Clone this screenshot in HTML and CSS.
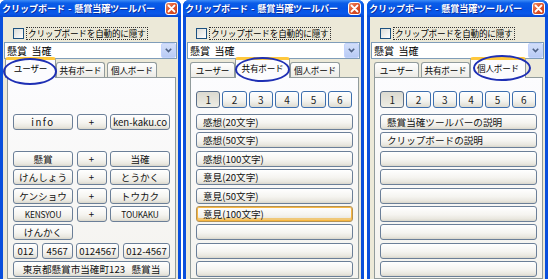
FILE: index.html
```html
<!DOCTYPE html>
<html lang="ja">
<head>
<meta charset="utf-8">
<title>クリップボード</title>
<link rel="stylesheet" href="styles.css">
</head>
<body>
<div class="desk">

  <div class="win w1">
    <div class="titlebar">
      <span class="title">クリップボード - 懸賞当確ツールバー</span>
      <span class="close"><svg width="9" height="9" viewBox="0 0 9 9"><path d="M1.5 1.5L7.5 7.5M7.5 1.5L1.5 7.5" stroke="#fff" stroke-width="1.8" stroke-linecap="round"/></svg></span>
    </div>
    <div class="body">
      <div class="chkrow"><span class="box"></span><span class="lbl">クリップボードを自動的に隠す</span></div>
      <div class="combo"><span class="ctext">懸賞&nbsp;&nbsp;当確</span><span class="drop"><svg width="7" height="5" viewBox="0 0 7 5"><path d="M0.8 0.8L3.5 3.6L6.2 0.8" fill="none" stroke="#4d6185" stroke-width="1.6"/></svg></span></div>
      <div class="tabs">
        <span class="tab t1 sel">ユーザー</span>
        <span class="tab t2">共有ボード</span>
        <span class="tab t3">個人ボード</span>
      </div>
      <div class="panel">
        <div class="numspacer"></div>
        <div class="list">
          <div class="row3"><span class="btn c wide spaced">info</span><span class="btn c">+</span><span class="btn c wide">ken-kaku.co</span></div>
          <div class="row3 empty"></div>
          <div class="row3"><span class="btn c wide">懸賞</span><span class="btn c">+</span><span class="btn c wide">当確</span></div>
          <div class="row3"><span class="btn c wide">けんしょう</span><span class="btn c">+</span><span class="btn c wide">とうかく</span></div>
          <div class="row3"><span class="btn c wide">ケンショウ</span><span class="btn c">+</span><span class="btn c wide">トウカク</span></div>
          <div class="row3"><span class="btn c wide caps">KENSYOU</span><span class="btn c">+</span><span class="btn c wide caps">TOUKAKU</span></div>
          <div class="row3"><span class="btn c wide">けんかく</span></div>
          <div class="row4"><span class="btn c">012</span><span class="btn c">4567</span><span class="btn c">0124567</span><span class="btn c">012-4567</span></div>
          <div class="row1"><span class="btn c">東京都懸賞市当確町123&nbsp;&nbsp;&nbsp;懸賞当</span></div>
        </div>
      </div>
    </div>
    <span class="mark m1"></span>
  </div>

  <div class="win w2">
    <div class="titlebar">
      <span class="title">クリップボード - 懸賞当確ツールバー</span>
      <span class="close"><svg width="9" height="9" viewBox="0 0 9 9"><path d="M1.5 1.5L7.5 7.5M7.5 1.5L1.5 7.5" stroke="#fff" stroke-width="1.8" stroke-linecap="round"/></svg></span>
    </div>
    <div class="body">
      <div class="chkrow"><span class="box"></span><span class="lbl">クリップボードを自動的に隠す</span></div>
      <div class="combo"><span class="ctext">懸賞&nbsp;&nbsp;当確</span><span class="drop"><svg width="7" height="5" viewBox="0 0 7 5"><path d="M0.8 0.8L3.5 3.6L6.2 0.8" fill="none" stroke="#4d6185" stroke-width="1.6"/></svg></span></div>
      <div class="tabs">
        <span class="tab t1">ユーザー</span>
        <span class="tab t2 sel">共有ボード</span>
        <span class="tab t3">個人ボード</span>
      </div>
      <div class="panel">
        <div class="nums"><span class="nb pressed">1</span><span class="nb">2</span><span class="nb">3</span><span class="nb">4</span><span class="nb">5</span><span class="nb">6</span></div>
        <div class="list">
          <div class="btn l">感想(20文字)</div>
          <div class="btn l">感想(50文字)</div>
          <div class="btn l">感想(100文字)</div>
          <div class="btn l">意見(20文字)</div>
          <div class="btn l">意見(50文字)</div>
          <div class="btn l hot">意見(100文字)</div>
          <div class="btn l"></div>
          <div class="btn l"></div>
          <div class="btn l"></div>
        </div>
      </div>
    </div>
    <span class="mark m2"></span>
  </div>

  <div class="win w3">
    <div class="titlebar">
      <span class="title">クリップボード - 懸賞当確ツールバー</span>
      <span class="close"><svg width="9" height="9" viewBox="0 0 9 9"><path d="M1.5 1.5L7.5 7.5M7.5 1.5L1.5 7.5" stroke="#fff" stroke-width="1.8" stroke-linecap="round"/></svg></span>
    </div>
    <div class="body">
      <div class="chkrow"><span class="box"></span><span class="lbl">クリップボードを自動的に隠す</span></div>
      <div class="combo"><span class="ctext">懸賞&nbsp;&nbsp;当確</span><span class="drop"><svg width="7" height="5" viewBox="0 0 7 5"><path d="M0.8 0.8L3.5 3.6L6.2 0.8" fill="none" stroke="#4d6185" stroke-width="1.6"/></svg></span></div>
      <div class="tabs">
        <span class="tab t1">ユーザー</span>
        <span class="tab t2">共有ボード</span>
        <span class="tab t3 sel">個人ボード</span>
      </div>
      <div class="panel">
        <div class="nums"><span class="nb pressed">1</span><span class="nb">2</span><span class="nb">3</span><span class="nb">4</span><span class="nb">5</span><span class="nb">6</span></div>
        <div class="list">
          <div class="btn l">懸賞当確ツールバーの説明</div>
          <div class="btn l">クリップボードの説明</div>
          <div class="btn l"></div>
          <div class="btn l"></div>
          <div class="btn l"></div>
          <div class="btn l"></div>
          <div class="btn l"></div>
          <div class="btn l"></div>
          <div class="btn l"></div>
        </div>
      </div>
    </div>
    <span class="mark m3"></span>
  </div>

</div>
</body>
</html>
```

FILE: styles.css
```css
* { box-sizing: border-box; }
html, body { margin: 0; padding: 0; background: #fff; }
body {
  font-family: "Noto Sans CJK JP", "Noto Sans", sans-serif;
  color: #000;
  width: 548px;
  height: 279px;
  overflow: hidden;
}
.desk {
  display: flex;
  gap: 2px;
  width: 548px;
  height: 279px;
}
.win {
  position: relative;
  width: 181px;
  height: 279px;
  display: flex;
  flex-direction: column;
  background: #0a4fdc;
  border-radius: 6px 6px 0 0;
  overflow: hidden;
  flex: none;
}
.w3 { margin-left: 1px; }
.titlebar {
  height: 17px;
  flex: none;
  display: flex;
  align-items: center;
  padding: 0 3px 0 2px;
  background: linear-gradient(#3d8cf7 0%, #0a5de8 18%, #0454e6 50%, #0a58ea 80%, #0748d0 100%);
}
.title {
  flex: 1;
  min-width: 0;
  overflow: hidden;
  color: #fff;
  font-weight: bold;
  font-size: 9.1px;
  white-space: nowrap;
  letter-spacing: -0.1px;
  word-spacing: 1px;
  text-shadow: 1px 1px 0 #0d2e9c;
  line-height: 17px;
}
.close {
  width: 13px;
  height: 13px;
  border: 1px solid #fff;
  border-radius: 3px;
  background: linear-gradient(135deg, #f0936e 0%, #e1552c 45%, #c9401b 100%);
  display: flex;
  align-items: center;
  justify-content: center;
  flex: none;
}
.body {
  flex: 1;
  margin: 0 3px;
  background: #ece9d8;
  display: flex;
  flex-direction: column;
  min-height: 0;
}
.chkrow {
  height: 25px;
  display: flex;
  align-items: center;
  padding: 7px 0 0 10px;
  flex: none;
}
.box {
  width: 11px;
  height: 11px;
  border: 1px solid #1c5180;
  background: linear-gradient(135deg, #dcdcd7 0%, #fff 100%);
  flex: none;
}
.lbl {
  margin-left: 3px;
  font-size: 8.6px;
  line-height: 11px;
  padding: 0 1px;
  outline: 1px dotted #333;
  outline-offset: 0;
  white-space: nowrap;
  letter-spacing: -0.2px;
}
.combo {
  margin: 0 1px 0 1px;
  height: 17px;
  border: 1px solid #7f9db9;
  background: #fff;
  display: flex;
  align-items: center;
  flex: none;
}
.ctext {
  flex: 1;
  font-size: 10px;
  padding-left: 2px;
  white-space: nowrap;
  line-height: 15px;
}
.drop {
  width: 15px;
  height: 15px;
  border-radius: 2px;
  background: linear-gradient(#d2def9, #b8cbf5);
  border: 1px solid #c3d3fd;
  display: flex;
  align-items: center;
  justify-content: center;
}
.tabs {
  display: flex;
  gap: 2px;
  padding: 0 0 0 4px;
  height: 18px;
  align-items: flex-end;
  flex: none;
  position: relative;
  z-index: 2;
}
.tab {
  height: 15px;
  font-size: 8.6px;
  line-height: 14px;
  text-align: center;
  border: 1px solid #919b9c;
  border-bottom: none;
  border-radius: 3px 3px 0 0;
  background: linear-gradient(#fff, #ecebe6);
  white-space: nowrap;
  letter-spacing: -0.2px;
}
.t1 { width: 45px; }
.t2 { width: 49px; }
.t3 { width: 50px; }
.tab.sel {
  height: 18px;
  margin: 0 -2px;
  padding: 0 2px;
  box-sizing: content-box;
  border-top: 3px solid #ffc83c;
  border-radius: 3px 3px 0 0;
  background: #fcfcfe;
  line-height: 16px;
  margin-bottom: -1px;
}
.panel {
  flex: 1;
  margin: 0 2px 0 4px;
  border: 1px solid #919b9c;
  background: linear-gradient(#fcfcfe, #f4f3ee);
  padding: 0 5px 0 5px;
  position: relative;
  z-index: 1;
}
.numspacer { height: 36px; }
.nums {
  display: flex;
  gap: 2px;
  margin-top: 13px;
  height: 17px;
  margin-bottom: 6px;
  padding-right: 1px;
}
.nb {
  flex: 1;
  border: 1px solid #3d6fae;
  border-radius: 3px;
  background: linear-gradient(#fff 0%, #f3f3ef 60%, #dedbd0 100%);
  font-size: 10px;
  line-height: 15px;
  text-align: center;
  color: #222;
}
.nb.pressed {
  background: linear-gradient(#dcdad0, #e6e4db 60%, #eeede6);
  border-color: #5a6e88;
}
.list {
  display: grid;
  grid-auto-rows: 16px;
  row-gap: 2.4px;
}
.btn {
  border: 1px solid #6b7f98;
  border-radius: 3px;
  background: linear-gradient(#fff 0%, #f5f4f0 55%, #e9e7df 85%, #d9d6cb 100%);
  font-size: 9.6px;
  line-height: 14px;
  white-space: nowrap;
  overflow: hidden;
  color: #111;
}
.btn.l { padding-left: 6px; }
.btn.c { text-align: center; }
.btn.hot {
  border-color: #b59354;
  box-shadow: inset 0 0 0 1px #f8b640, inset 0 -2px 0 1px #f0c878;
}
.row3 {
  display: grid;
  grid-template-columns: 60px 30px 60px;
  justify-content: space-between;
}
.row3 .btn { display: block; }
.row4 {
  display: grid;
  grid-template-columns: 25px 31px 43px 47px;
  justify-content: space-between;
}
.row1 { display: grid; }
.spaced { letter-spacing: 1.5px; }
.caps { font-size: 8.4px; letter-spacing: -0.2px; }
.mark {
  position: absolute;
  border: 2.5px solid #1e2fb4;
  border-radius: 50%;
  z-index: 5;
  pointer-events: none;
}
.m1 { left: 3px; top: 58px; width: 54px; height: 27px; }
.m2 { left: 52px; top: 57px; width: 55px; height: 25px; }
.m3 { left: 106px; top: 55px; width: 58px; height: 26px; }
```
